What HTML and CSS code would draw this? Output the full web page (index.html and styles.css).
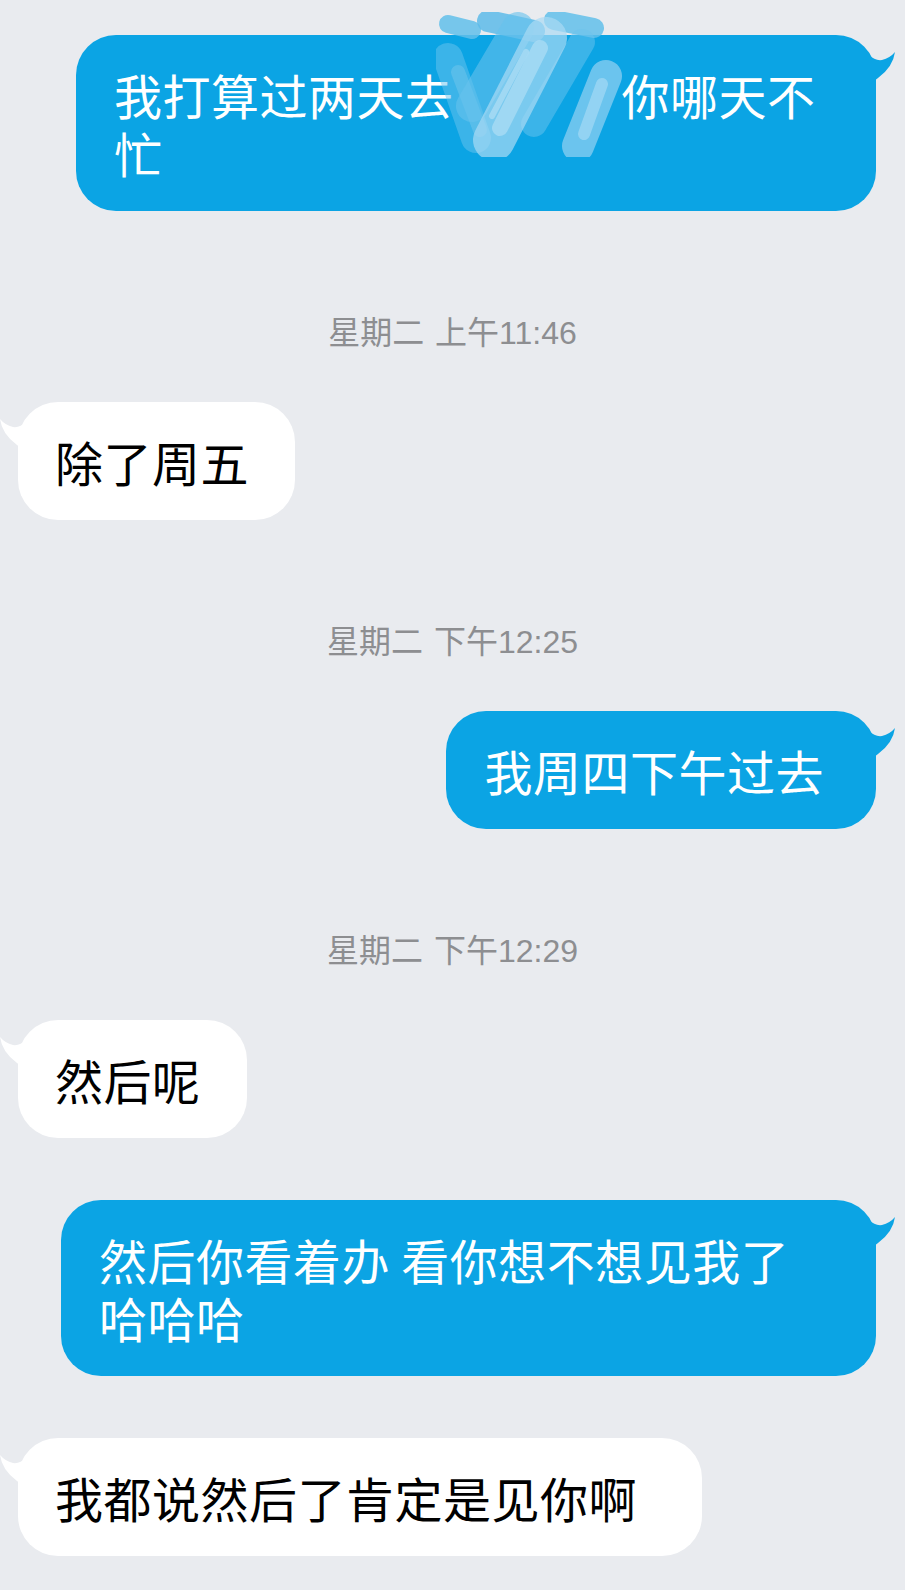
FILE: index.html
```html
<!DOCTYPE html>
<html lang="zh-CN">
<head>
    <meta charset="UTF-8">
    <meta name="viewport" content="width=device-width, initial-scale=1.0">
    <title>聊天记录</title>
    <link rel="stylesheet" href="styles.css">
</head>
<body>
    <div class="chat">
        <div class="row row-out">
            <div class="bubble bubble-out bubble-w800">
                我打算过两天去<span class="masked"></span>你哪天不忙
                <svg class="tail tail-out" viewBox="0 0 26 36" width="26" height="36"><path d="M0 6 Q6 12 13 11 Q21 9 26 3 Q24 18 9 29 L0 36 Z"/></svg>
                <!-- hand scribble hiding part of the message -->
                <svg class="scribble" viewBox="0 0 196 145" width="196" height="145">
                    <g stroke-linecap="round" fill="none">
                        <path d="M12 12 L36 18" stroke="#62bfea" stroke-width="18" opacity="0.85"/>
                        <path d="M52 9 L98 19" stroke="#5dbbe9" stroke-width="22" opacity="0.85"/>
                        <path d="M118 8 L158 16" stroke="#62bfea" stroke-width="20" opacity="0.85"/>
                        <path d="M12 46 L40 126" stroke="#6cc3ee" stroke-width="30" opacity="0.5"/>
                        <path d="M22 60 L44 118" stroke="#8ccfef" stroke-width="14" opacity="0.35"/>
                        <path d="M82 16 L36 94" stroke="#66c1ec" stroke-width="32" opacity="0.6"/>
                        <path d="M146 30 L98 112" stroke="#6cc3ee" stroke-width="26" opacity="0.5"/>
                        <path d="M110 26 L58 128" stroke="#a9daf4" stroke-width="42" opacity="0.7"/>
                        <path d="M104 36 L64 116" stroke="#cbe8f8" stroke-width="16" opacity="0.45"/>
                        <path d="M90 40 L56 104" stroke="#d9eefa" stroke-width="6" opacity="0.4"/>
                        <path d="M170 64 L142 134" stroke="#94d2f2" stroke-width="32" opacity="0.7"/>
                        <path d="M166 72 L148 122" stroke="#c6e7f8" stroke-width="12" opacity="0.45"/>
                    </g>
                </svg>
            </div>
        </div>

        <div class="time">星期二 上午11:46</div>

        <div class="row row-in">
            <div class="bubble bubble-in">
                除了周五
                <svg class="tail tail-in" viewBox="0 0 26 36" width="26" height="36"><path d="M0 6 Q6 12 13 11 Q21 9 26 3 Q24 18 9 29 L0 36 Z"/></svg>
            </div>
        </div>

        <div class="time">星期二 下午12:25</div>

        <div class="row row-out">
            <div class="bubble bubble-out">
                我周四下午过去
                <svg class="tail tail-out" viewBox="0 0 26 36" width="26" height="36"><path d="M0 6 Q6 12 13 11 Q21 9 26 3 Q24 18 9 29 L0 36 Z"/></svg>
            </div>
        </div>

        <div class="time">星期二 下午12:29</div>

        <div class="row row-in">
            <div class="bubble bubble-in">
                然后呢
                <svg class="tail tail-in" viewBox="0 0 26 36" width="26" height="36"><path d="M0 6 Q6 12 13 11 Q21 9 26 3 Q24 18 9 29 L0 36 Z"/></svg>
            </div>
        </div>

        <div class="row row-out">
            <div class="bubble bubble-out bubble-w815">
                然后你看着办 看你想不想见我了哈哈哈
                <svg class="tail tail-out" viewBox="0 0 26 36" width="26" height="36"><path d="M0 6 Q6 12 13 11 Q21 9 26 3 Q24 18 9 29 L0 36 Z"/></svg>
            </div>
        </div>

        <div class="row row-in">
            <div class="bubble bubble-in bubble-long">
                我都说然后了肯定是见你啊
                <svg class="tail tail-in" viewBox="0 0 26 36" width="26" height="36"><path d="M0 6 Q6 12 13 11 Q21 9 26 3 Q24 18 9 29 L0 36 Z"/></svg>
            </div>
        </div>
    </div>
</body>
</html>
```

FILE: styles.css
```css
html {
    background-color: #e9ebef;
}
body {
    margin: 0;
    font-family: "Noto Sans CJK SC", sans-serif;
    overflow: hidden;
}
.chat {
    display: flex;
    flex-direction: column;
    padding: 35px 0 35px;
    min-height: 1590px;
    box-sizing: border-box;
}
.row {
    display: flex;
    margin-top: 62px;
}
.row:first-child {
    margin-top: 0;
}
.time + .row {
    margin-top: 49px;
}
.row-out {
    justify-content: flex-end;
    padding-right: 29px;
}
.row-in {
    justify-content: flex-start;
    padding-left: 18px;
}
.time {
    margin-top: 102px;
    height: 40px;
    line-height: 40px;
    text-align: center;
    font-family: "Liberation Sans", "Noto Sans CJK SC", sans-serif;
    font-size: 32px;
    word-spacing: 2px;
    color: #8d8e91;
}
.bubble {
    position: relative;
    box-sizing: border-box;
    border-radius: 40px;
    padding: 30px 52px 30px 38px;
    font-size: 48px;
    line-height: 58px;
    letter-spacing: 0.5px;
}
.bubble-out {
    background-color: #0ba4e4;
    color: #fff;
}
.bubble-in {
    background-color: #fff;
    color: #000;
    padding: 30px 46px 30px 37px;
}
.bubble-w800 {
    max-width: 800px;
}
.bubble-w815 {
    max-width: 815px;
}
.bubble-long {
    min-width: 684px;
}
.masked {
    display: inline-block;
    width: 168px;
}
.tail {
    position: absolute;
    top: 14px;
}
.tail-out {
    right: -19px;
    fill: #0ba4e4;
}
.tail-in {
    left: -18px;
    fill: #fff;
    transform: scaleX(-1);
}
.scribble {
    position: absolute;
    left: 360px;
    top: -23px;
}
```
